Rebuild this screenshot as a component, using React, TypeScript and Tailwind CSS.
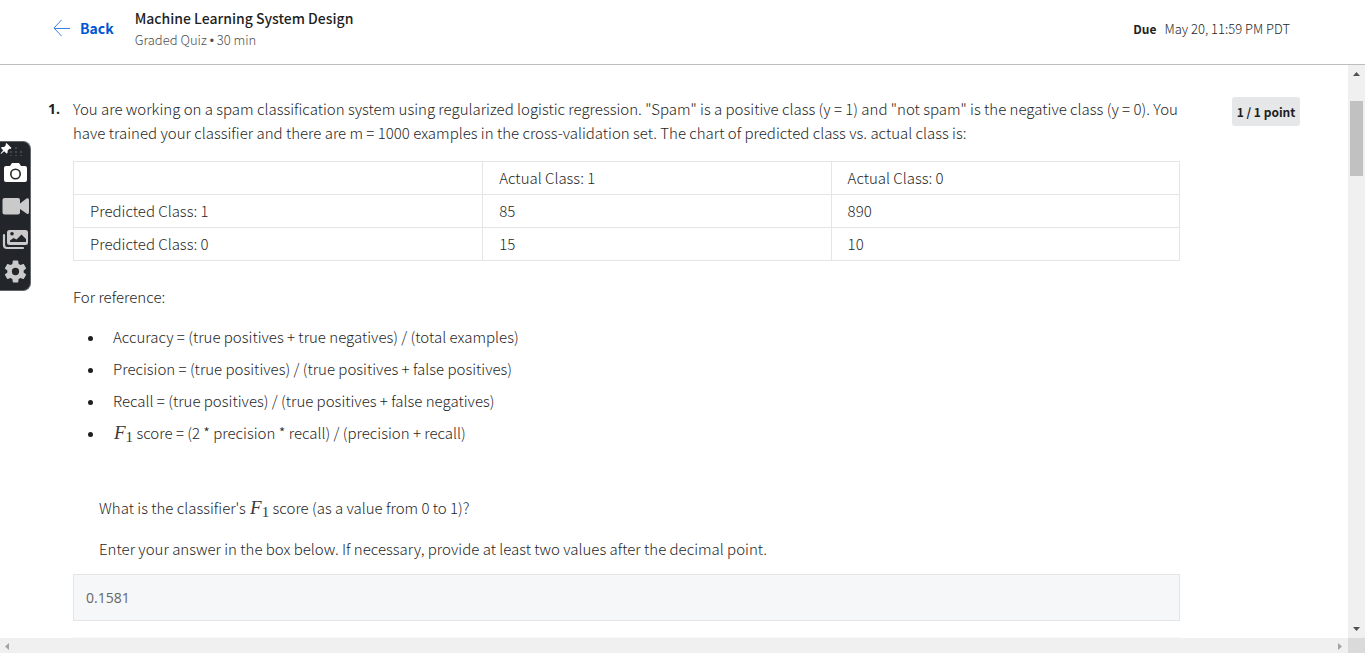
import React from "react";

const formulas = [
  "Accuracy = (true positives + true negatives) / (total examples)",
  "Precision = (true positives) / (true positives + false positives)",
  "Recall = (true positives) / (true positives + false negatives)",
];

const rows = [
  ["", "Actual Class: 1", "Actual Class: 0"],
  ["Predicted Class: 1", "85", "890"],
  ["Predicted Class: 0", "15", "10"],
];

function FOne() {
  return (
    <span className="pl-px font-['Liberation_Serif',serif] text-[19px] leading-none text-[#3a3a3a]">
      <i>F</i>
      <sub className="-bottom-[3px] text-[15px]">1</sub>
    </span>
  );
}

function Header() {
  return (
    <header className="flex h-[65px] shrink-0 items-start border-b border-[#bdbdbd] pl-[53px] pr-[75px]">
      <a href="#back" className="mt-4 flex h-6 items-center gap-[10px] text-sm font-bold text-[#0056d2]">
        <svg width="17" height="18" viewBox="0 0 17 18" fill="none" stroke="#3f7fe0" aria-hidden="true">
          <path d="M8.5 1 L1 9 L8.5 17 M1 9.5 H17" />
        </svg>
        Back
      </a>
      <div className="ml-[21px] mt-[7px]">
        <h1 className="text-sm leading-[22px] font-medium text-[#1f1f1f]">Machine Learning System Design</h1>
        <p className="text-[13px] leading-[22px] font-light text-[#4f4f4f]">
          Graded Quiz <span className="font-['Liberation_Sans',sans-serif] text-xs">•</span> 30 min
        </p>
      </div>
      <p className="ml-auto mt-[18px] flex gap-2 text-xs leading-[22px] text-[#1f1f1f]">
        <b>Due</b>
        <span className="text-[13px] font-light text-[#1f1f1f]">May 20, 11:59 PM PDT</span>
      </p>
    </header>
  );
}

function Toolbar() {
  return (
    <aside className="absolute left-0 top-[141px] flex h-[150px] w-[31px] flex-col items-start rounded-r-lg border-y border-r border-[#63666a] bg-[#22262b] text-[#cacaca]">
      <svg className="h-4 w-7 shrink-0" viewBox="0 0 28 16" aria-hidden="true">
        <path d="M6.5 1 L11.5 6 L10.4 7 L9.4 6.7 L7.7 8.6 L7.5 11 L6.5 11.6 L4.2 9.3 L1 12 L.6 11.6 L3.2 8.3 L1 6.1 L1.7 5.1 L4.1 4.9 L6 3.1 L5.6 2 Z" fill="#fff" />
        <path d="M10 9h2v2h-2z M15 9h2v2h-2z M20 9h2v2h-2z M10 13h2v1h-2z M15 13h2v1h-2z M20 13h2v1h-2z M15 5h2v2h-2z" fill="#43474c" />
      </svg>
      <button aria-label="Take screenshot" className="ml-[3px] mt-1">
        <svg width="25" height="21" viewBox="0 0 25 21" aria-hidden="true">
          <path d="M3 4 H7 L9 1 H16 L18 4 H22 Q24 4 24 6 V18 Q24 20 22 20 H3 Q1 20 1 18 V6 Q1 4 3 4Z" fill="#fff" />
          <circle cx="12.5" cy="12" r="4.7" fill="none" stroke="#22262b" strokeWidth="1.6" />
        </svg>
      </button>
      <button aria-label="Record video" className="ml-[2px] mt-[13px]">
        <svg width="27" height="21" viewBox="0 0 27 21" fill="currentColor" aria-hidden="true">
          <path d="M2.5 2 H16 Q18 2 18 4 V7.5 L24.5 2.5 Q27 1.5 27 4 V16 Q27 19 24.5 17.5 L18 13 V16.5 Q18 18.5 16 18.5 H2.5 Q.5 18.5 .5 16.5 V4 Q.5 2 2.5 2Z" />
        </svg>
      </button>
      <button aria-label="Gallery" className="ml-[2px] mt-3">
        <svg width="27" height="21" viewBox="0 0 27 21" aria-hidden="true">
          <path d="M2 6 V16 Q2 19 5 19 H21" fill="none" stroke="currentColor" strokeWidth="2.2" strokeLinecap="round" />
          <rect x="5" y="1" width="21" height="15" rx="2.5" fill="currentColor" />
          <path d="M8 13 V11.5 L11.500 9 L14.500 10.500 L19.500 5.500 L24 10 V13 Z" fill="#22262b" />
          <circle cx="10" cy="4.7" r="1.8" fill="#22262b" />
        </svg>
      </button>
      <button aria-label="Settings" className="ml-[3px] mt-[9px]">
        <svg width="25" height="25" viewBox="1 1 22 22" fill="currentColor" aria-hidden="true">
          <path d="M19.14 12.94c.04-.3.06-.61.06-.94 0-.32-.02-.64-.07-.94l2.03-1.58c.18-.14.23-.41.12-.61l-1.92-3.32c-.12-.22-.37-.29-.59-.22l-2.39.96c-.5-.38-1.03-.7-1.62-.94l-.36-2.54c-.04-.24-.24-.41-.48-.41h-3.84c-.24 0-.43.17-.47.41l-.36 2.54c-.59.24-1.13.57-1.62.94l-2.39-.96c-.22-.08-.47 0-.59.22L2.74 8.87c-.12.21-.08.47.12.61l2.03 1.58c-.05.3-.09.63-.09.94s.02.64.07.94l-2.03 1.58c-.18.14-.23.41-.12.61l1.92 3.32c.12.22.37.29.59.22l2.39-.96c.5.38 1.03.7 1.62.94l.36 2.54c.05.24.24.41.48.41h3.84c.24 0 .44-.17.47-.41l.36-2.54c.59-.24 1.13-.56 1.62-.94l2.39.96c.22.08.47 0 .59-.22l1.92-3.32c.12-.22.07-.47-.12-.61l-2.01-1.58zM12 15.2a3.2 3.2 0 1 1 0-6.4 3.2 3.2 0 0 1 0 6.4z" />
        </svg>
      </button>
    </aside>
  );
}

function Question() {
  return (
    <main className="flex min-w-0 flex-1 items-start overflow-hidden pl-12 pr-12 pt-8 text-[15px] font-light leading-6 text-[#1f1f1f]">
      <span className="w-[25px] shrink-0 font-['Open_Sans',sans-serif] text-sm font-bold leading-6 text-[#1f1f1f]">1.</span>
      <section className="min-w-0 flex-1">
        <p className="-mr-2">
          You are working on a spam classification system using regularized logistic regression. "Spam" is a positive
          class (y = 1) and "not spam" is the negative class (y = 0). You have trained your classifier and there are m =
          1000 examples in the cross-validation set. The chart of predicted class vs. actual class is:
        </p>
        <table className="mt-4 w-full table-fixed border-collapse">
          <colgroup>
            <col className="w-[37%]" />
            <col />
            <col />
          </colgroup>
          <tbody>
            {rows.map((row, i) => (
              <tr key={i} className="h-[33px]">
                {row.map((cell, j) => (
                  <td key={j} className="border border-[#e5e5e5] px-4 py-1">{cell}</td>
                ))}
              </tr>
            ))}
          </tbody>
        </table>
        <p className="mt-6">For reference:</p>
        <ul className="mt-4 flex flex-col gap-2 pl-10">
          {formulas.map((text) => (
            <li key={text} className="relative h-6 before:absolute before:-left-[25px] before:top-[11px] before:size-[5px] before:rounded-full before:bg-[#1f1f1f]">{text}</li>
          ))}
          <li className="relative h-6 before:absolute before:-left-[25px] before:top-[11px] before:size-[5px] before:rounded-full before:bg-[#1f1f1f]">
            <FOne /> score = (2 * precision * recall) / (precision + recall)
          </li>
        </ul>
        <label htmlFor="answer" className="mt-[51px] flex flex-col gap-[17px] pl-[26px]">
          <span className="h-6">What is the classifier's <FOne /> score (as a value from 0 to 1)?</span>
          <span>Enter your answer in the box below. If necessary, provide at least two values after the decimal point.</span>
        </label>
        <input
          id="answer"
          readOnly
          value="0.1581"
          className="mt-[13px] block h-[47px] w-full border border-[#e5e5e5] bg-[#f5f7f8] px-3 font-['Open_Sans',sans-serif] text-sm font-normal text-[#666] outline-none"
        />
        <div className="mt-4 h-12 bg-[#f8f8f8]" />
      </section>
      <span className="ml-[52px] flex h-[29px] w-[68px] shrink-0 items-center justify-center rounded-[3px] bg-[#e5e7e8] text-xs font-bold text-[#1f1f1f]">
        1 / 1 point
      </span>
    </main>
  );
}

export default function App() {
  return (
    <div className="relative flex h-screen flex-col overflow-hidden bg-white font-['Noto_Sans_CJK_SC',sans-serif]">
      <Header />
      <div className="flex min-h-0 flex-1">
        <Question />
        <div className="flex w-[17px] shrink-0 flex-col items-center bg-[#f0f0f0]">
          <svg width="17" height="17" viewBox="0 0 17 17" fill="#505050" aria-hidden="true"><path d="M5 11h7L8.5 7z" /></svg>
          <div className="mt-[19px] h-[75px] w-[13px] bg-[#c1c1c1]" />
          <svg className="mt-auto" width="17" height="17" viewBox="0 0 17 17" fill="#505050" aria-hidden="true"><path d="M5 6h7l-3.500 4z" /></svg>
        </div>
      </div>
      <div className="flex h-[15px] shrink-0 items-center bg-[#f0f0f0]">
        <svg width="15" height="15" viewBox="0 0 15 15" fill="#a3a3a3" aria-hidden="true"><path d="M9 5v7L5 8.500z" /></svg>
        <svg className="ml-auto" width="15" height="15" viewBox="0 0 15 15" fill="#a3a3a3" aria-hidden="true"><path d="M5 5v7l4-3.500z" /></svg>
        <div className="h-full w-[17px] bg-[#dadada]" />
      </div>
      <Toolbar />
    </div>
  );
}
